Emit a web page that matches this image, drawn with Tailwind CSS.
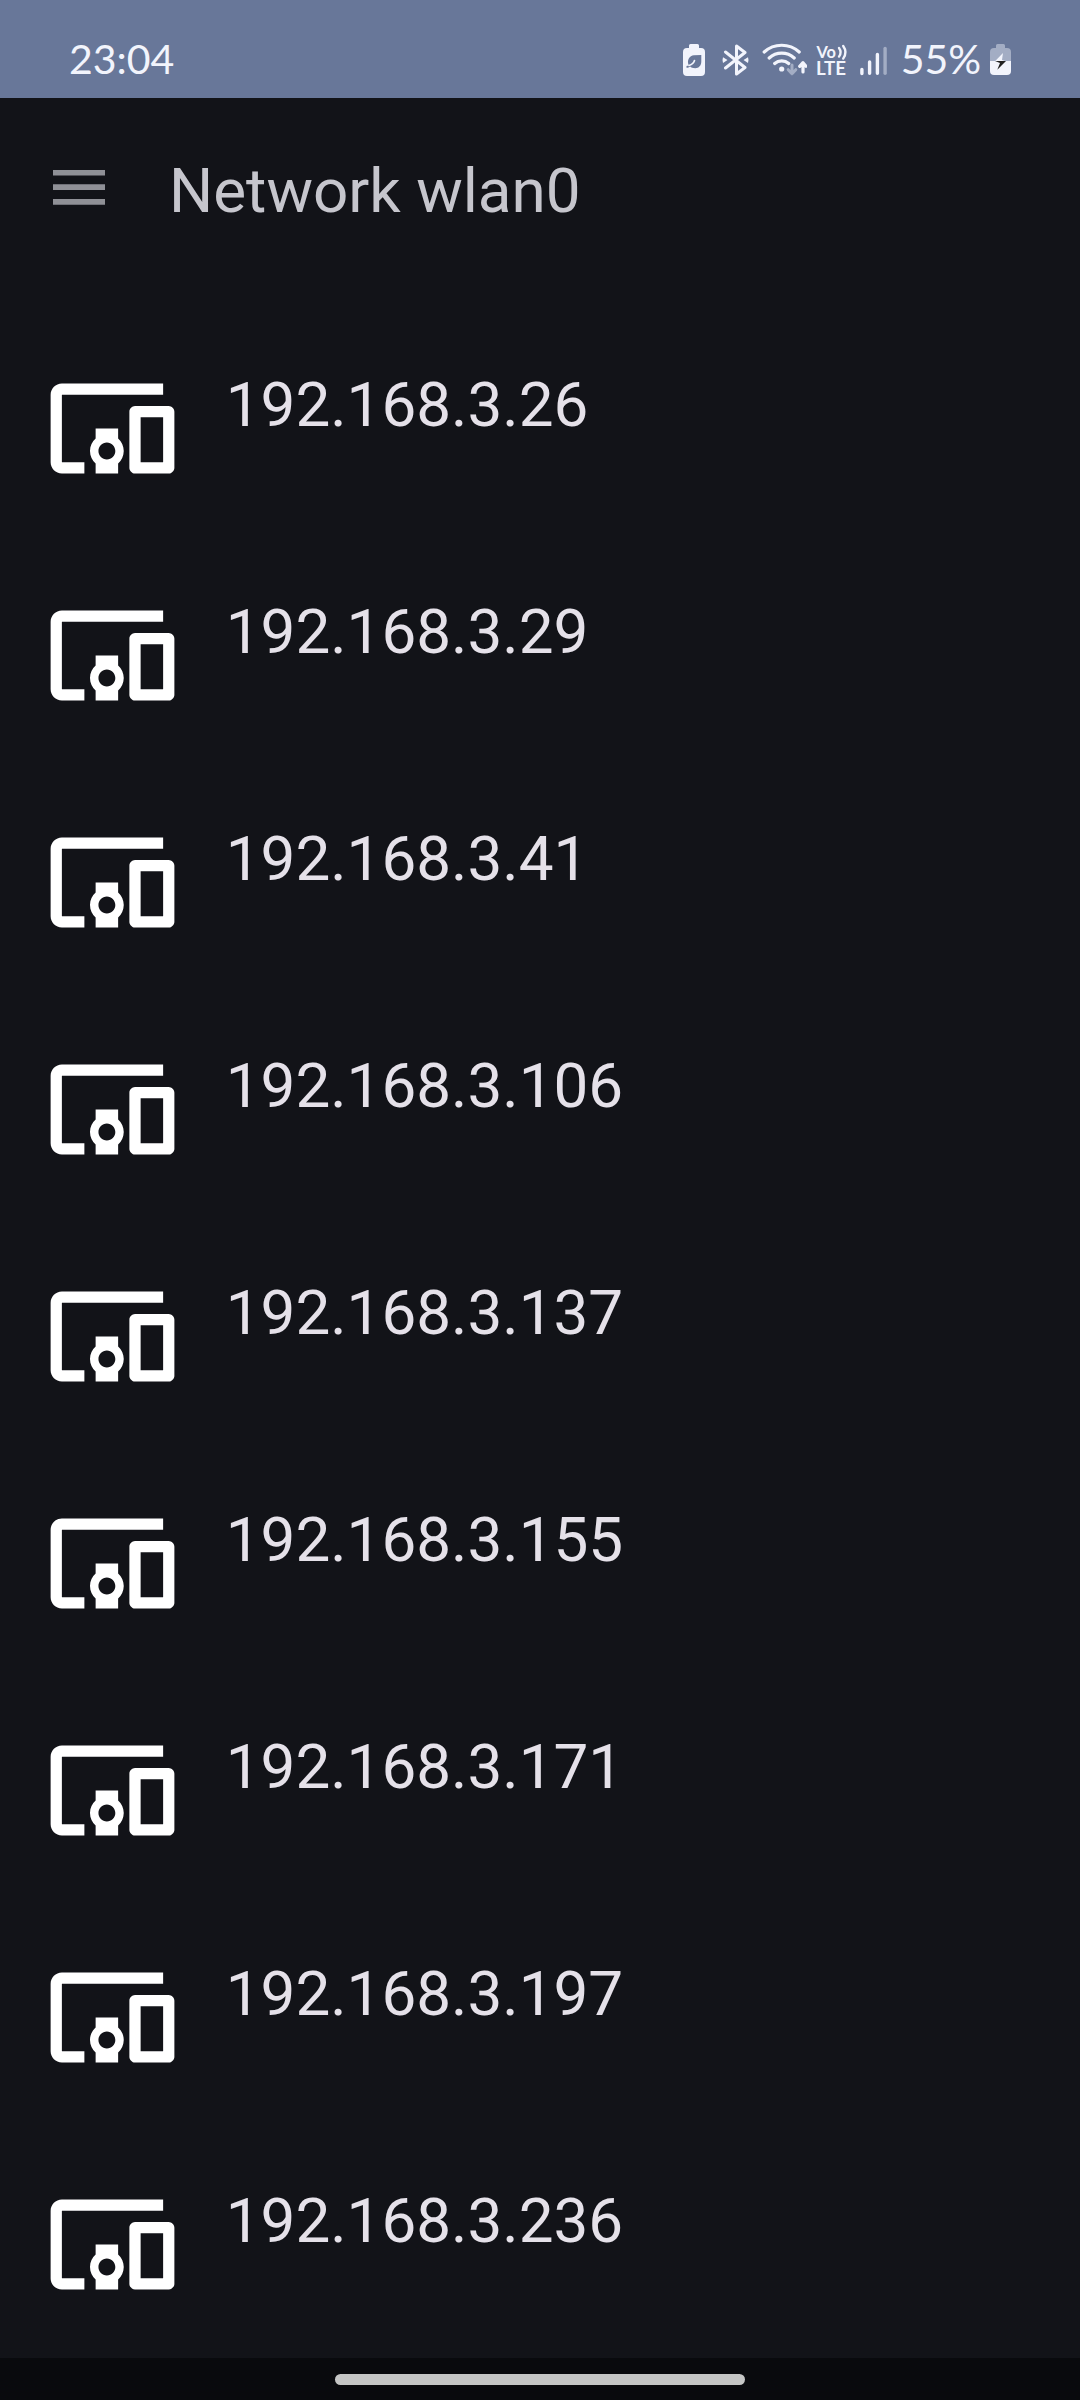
<!DOCTYPE html>
<html lang="en">
<head>
<meta charset="utf-8">
<title>Network wlan0</title>
<script src="https://cdn.jsdelivr.net/npm/@tailwindcss/browser@4"></script>
</head>
<body class="bg-[#121318]">
<svg class="hidden">
  <symbol id="devices" viewBox="0 0 24 24"><path fill="#fff" d="M3 6h18V4H3c-1.1 0-2 .9-2 2v12c0 1.1.9 2 2 2h4v-2H3V6zm10 6H9v1.78c-.61.55-1 1.33-1 2.22s.39 1.67 1 2.22V20h4v-1.780c.61-.55 1-1.34 1-2.220s-.39-1.67-1-2.220V12zm-2 5.500c-.83 0-1.500-.67-1.500-1.500s.67-1.500 1.500-1.500 1.500.67 1.500 1.500-.67 1.500-1.500 1.500zM22 8h-6c-.5 0-1 .5-1 1v10c0 .5.5 1 1 1h6c.5 0 1-.5 1-1V9c0-.5-.5-1-1-1zm-1 10h-4v-8h4v8z"/></symbol>
</svg>
<div class="flex h-[2400px] w-[1080px] flex-col overflow-hidden font-[Roboto,sans-serif]">
  <header class="flex h-[98px] shrink-0 justify-between bg-[#687799] pt-[34px] pr-[69px] pl-[69px] font-[Lato,sans-serif] text-[41px] leading-[50px] text-[#f2f4fc]">
    <span>23:04</span>
    <div class="flex">
      <!-- battery saver -->
      <svg class="mt-[10px] mr-[17px] h-[32px] w-[22px]" viewBox="0 0 22 32"><path fill="#f2f4fc" d="M7.500 0h7q1.500 0 1.500 1.500V4h2q4 0 4 4v20q0 4-4 4H4q-4 0-4-4V8q0-4 4-4h2V1.500Q6 0 7.500 0z"/><path fill="#687799" d="M18.300 11v6.500c0 4-2.500 6.700-6 6.700-2.500 0-4.300-.8-5.100-1.700-1.200.8-2.200 1.300-3.700 1.300v-1.700c1-.1 1.600-.3 2.300-.8C3.500 16 6.500 11.500 11 11.200z"/><path d="M6 21.500q4.500-1.500 5.500-5" fill="none" stroke="#f2f4fc" stroke-width="1.700" stroke-linecap="round"/></svg>
      <!-- bluetooth -->
      <svg class="mt-[10px] mr-[12px] h-[32px] w-[27px]" viewBox="0 0 27 32"><path fill="none" stroke="#f2f4fc" stroke-width="3" stroke-linecap="round" stroke-linejoin="round" d="M3.500 8 23 23.500 14.500 30V2L23 8.500 3.500 24"/><path fill="#f2f4fc" d="M1 13.200 5.500 16 1 19q-1-3 0-5.800zM26 13.200 21.500 16 26 19q1-3 0-5.800z"/></svg>
      <!-- wifi -->
      <svg class="mt-[9px] mr-[9px] h-[33px] w-[46px]" viewBox="0 0 46 33"><g fill="none" stroke="#f2f4fc" stroke-width="3.200" stroke-linecap="round"><path d="M3.200 9a26 26 0 0 1 35 0M8.200 15a18.500 18.500 0 0 1 25 0M13.700 20.500a10.500 10.500 0 0 1 14 0"/><path stroke-linejoin="round" d="M42 29V20m-3.300 3.300L42 19.700l3 3.600"/></g><circle cx="20.700" cy="26" r="2.600" fill="#f2f4fc"/><path fill="none" stroke="#a3adc4" stroke-width="3" stroke-linecap="round" stroke-linejoin="round" d="M31 22v8.500m-3.800-3.800 3.800 4 3.800-4"/></svg>
      <!-- VoLTE -->
      <svg class="mt-[8px] mr-[13px] h-[36px] w-[31px] overflow-visible" viewBox="0 0 31 36"><g fill="#f2f4fc" font-family="Lato, sans-serif" font-weight="700"><text x="0.500" y="15.500" font-size="17" textLength="19.500" lengthAdjust="spacingAndGlyphs">Vo</text><text x="0" y="33.300" font-size="18" textLength="30" lengthAdjust="spacingAndGlyphs">LTE</text></g><path fill="none" stroke="#f2f4fc" stroke-width="2.400" stroke-linecap="round" d="M23 6q3.200 4.300 0 8.600M27.200 4q4.500 6.300 0 12.600"/></svg>
      <!-- signal -->
      <svg class="mt-[10px] mr-[13px] h-[32px] w-[27px]" viewBox="0 0 27 32"><g stroke="#f2f4fc" stroke-width="3.400" stroke-linecap="round"><path d="M1.900 26v4M9.600 18.500v11.200M17.400 11v18.700" transform="translate(0 -.5)"/><path stroke="#a3adc4" d="M25.100 4.500v24.700"/></g></svg>
      <span class="mr-[8px] flex w-[82px] justify-center">55%</span>
      <!-- charging battery -->
      <svg class="mt-[10px] h-[31px] w-[21px]" viewBox="0 0 21 31"><path fill="#a3adc4" d="M7.500 0h6q1.500 0 1.500 1.500V4h2q4 0 4 4v9H0V8q0-4 4-4h2V1.500Q6 0 7.500 0z"/><path fill="#f2f4fc" d="M0 17h21V27q0 4-4 4H4q-4 0-4-4z"/><path fill="#f2f4fc" d="M13 9 5 17.200h11L12 16z"/><path fill="#222" d="M5 17h11L7.300 25.800 10 19z"/></svg>
    </div>
  </header>
  <div class="flex h-[262px] shrink-0 pl-[53px]">
    <svg class="mt-[72px] mr-[64px] h-[35px] w-[52px]" viewBox="0 0 52 35"><path fill="#8f9096" d="M0 0h52v5.500H0zM0 14.300h52v5.700H0zM0 29h52v5.700H0z"/></svg>
    <h1 class="mt-[56px] text-[62px] leading-[74px] text-[#c6c6cd]">Network wlan0</h1>
  </div>
  <main class="h-[1998px] shrink-0 text-[62px] leading-[74px] text-[#e5e1e9]">
    <ul>
      <li class="flex h-[227px] gap-[46px] pl-[44.700px]"><svg class="mt-[0.500px] size-[135px] shrink-0"><use href="#devices"/></svg><span class="mt-[8px]">192.168.3.26</span></li>
      <li class="flex h-[227px] gap-[46px] pl-[44.700px]"><svg class="mt-[0.500px] size-[135px] shrink-0"><use href="#devices"/></svg><span class="mt-[8px]">192.168.3.29</span></li>
      <li class="flex h-[227px] gap-[46px] pl-[44.700px]"><svg class="mt-[0.500px] size-[135px] shrink-0"><use href="#devices"/></svg><span class="mt-[8px]">192.168.3.41</span></li>
      <li class="flex h-[227px] gap-[46px] pl-[44.700px]"><svg class="mt-[0.500px] size-[135px] shrink-0"><use href="#devices"/></svg><span class="mt-[8px]">192.168.3.106</span></li>
      <li class="flex h-[227px] gap-[46px] pl-[44.700px]"><svg class="mt-[0.500px] size-[135px] shrink-0"><use href="#devices"/></svg><span class="mt-[8px]">192.168.3.137</span></li>
      <li class="flex h-[227px] gap-[46px] pl-[44.700px]"><svg class="mt-[0.500px] size-[135px] shrink-0"><use href="#devices"/></svg><span class="mt-[8px]">192.168.3.155</span></li>
      <li class="flex h-[227px] gap-[46px] pl-[44.700px]"><svg class="mt-[0.500px] size-[135px] shrink-0"><use href="#devices"/></svg><span class="mt-[8px]">192.168.3.171</span></li>
      <li class="flex h-[227px] gap-[46px] pl-[44.700px]"><svg class="mt-[0.500px] size-[135px] shrink-0"><use href="#devices"/></svg><span class="mt-[8px]">192.168.3.197</span></li>
      <li class="flex h-[182px] gap-[46px] pl-[44.700px]"><svg class="mt-[0.500px] size-[135px] shrink-0"><use href="#devices"/></svg><span class="mt-[8px]">192.168.3.236</span></li>
    </ul>
  </main>
  <footer class="flex h-[42px] shrink-0 justify-center bg-[#090a0d] pt-[16px]">
    <div class="h-[11px] w-[410px] rounded-full bg-[#c5c6c5]"></div>
  </footer>
</div>
</body>
</html>
